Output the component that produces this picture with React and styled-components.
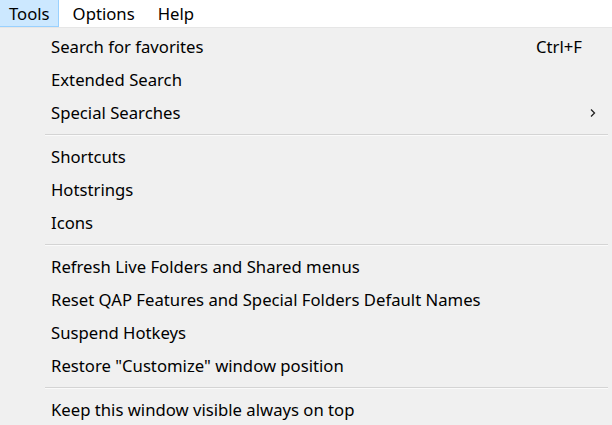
import React from "react";
import styled, { createGlobalStyle } from "styled-components";

const Global = createGlobalStyle`
  html, body { margin: 0; padding: 0; background: #ffffff; }
  body { font-family: "Noto Sans", "Open Sans", sans-serif; color: #000; }
`;

const Page = styled.div`
  width: 612px;
  height: 425px;
  overflow: hidden;
  display: flex;
  flex-direction: column;
  background: #ffffff;
`;

const MenuBar = styled.div`
  display: flex;
  align-items: stretch;
  height: 27px;
  flex-shrink: 0;
  background: #ffffff;
  border-bottom: 1px solid #e6e6e6;
`;

const BarItem = styled.div`
  display: flex;
  align-items: center;
  padding: 0 ${(p) => p.$pr}px 0 ${(p) => p.$pl}px;
  font-size: 16.7px;
  background: ${(p) => (p.$active ? "#cce8ff" : "transparent")};
  border-right: 1px solid ${(p) => (p.$active ? "#99d1ff" : "transparent")};
  border-bottom: 1px solid ${(p) => (p.$active ? "#99d1ff" : "transparent")};
`;

const Panel = styled.div`
  flex: 1;
  background: #f0f0f0;
  padding-top: 2px;
  display: flex;
  flex-direction: column;
`;

const Item = styled.div`
  display: flex;
  align-items: center;
  justify-content: space-between;
  height: 33px;
  flex-shrink: 0;
  padding-left: 51px;
  padding-right: ${(p) => (p.$sub ? 14 : 30)}px;
  font-size: 16.7px;
  white-space: nowrap;
`;

const Shortcut = styled.span`
  font-size: 16.7px;
`;

const Chevron = styled.svg`
  width: 10px;
  height: 10px;
`;

const Separator = styled.div`
  height: 11px;
  flex-shrink: 0;
  display: flex;
  align-items: center;
  padding-left: 45px;
  padding-right: 4px;
  &::after {
    content: "";
    flex: 1;
    height: 1px;
    background: #d4d4d4;
    box-shadow: 0 1px 0 #fafafa;
  }
`;

const groups = [
  [
    { label: "Search for favorites", shortcut: "Ctrl+F" },
    { label: "Extended Search" },
    { label: "Special Searches", sub: true },
  ],
  [{ label: "Shortcuts" }, { label: "Hotstrings" }, { label: "Icons" }],
  [
    { label: "Refresh Live Folders and Shared menus" },
    { label: "Reset QAP Features and Special Folders Default Names" },
    { label: "Suspend Hotkeys" },
    { label: 'Restore "Customize" window position' },
  ],
  [{ label: "Keep this window visible always on top" }],
];

export default function App() {
  return (
    <Page>
      <Global />
      <MenuBar>
        <BarItem $active $pl={9} $pr={8}>Tools</BarItem>
        <BarItem $pl={14} $pr={11}>Options</BarItem>
        <BarItem $pl={11} $pr={9}>Help</BarItem>
      </MenuBar>
      <Panel>
        {groups.map((g, gi) => (
          <React.Fragment key={gi}>
            {gi > 0 && <Separator />}
            {g.map((it) => (
              <Item key={it.label} $sub={it.sub}>
                <span>{it.label}</span>
                {it.shortcut && <Shortcut>{it.shortcut}</Shortcut>}
                {it.sub && (
                  <Chevron viewBox="0 0 10 10">
                    <path d="M3 1.5 L6.5 5 L3 8.5" fill="none" stroke="#222" strokeWidth="1.3" />
                  </Chevron>
                )}
              </Item>
            ))}
          </React.Fragment>
        ))}
      </Panel>
    </Page>
  );
}
